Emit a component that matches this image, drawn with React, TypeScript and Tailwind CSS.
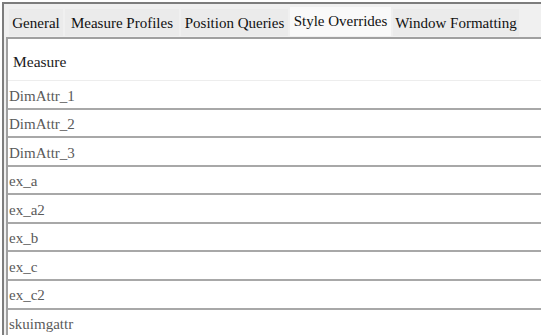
import React from 'react';

const tabs = [
  { label: 'General', w: 'w-[54px]' },
  { label: 'Measure Profiles', w: 'w-[114px]' },
  { label: 'Position Queries', w: 'w-[107px]' },
  { label: 'Style Overrides', w: 'w-[101px]', active: true },
  { label: 'Window Formatting', w: 'w-[126px]' },
];
const rows = ['DimAttr_1', 'DimAttr_2', 'DimAttr_3', 'ex_a', 'ex_a2', 'ex_b', 'ex_c', 'ex_c2', 'skuimgattr'];

export default function App() {
  return (
    <div className="w-[541px] h-[335px] overflow-hidden bg-white font-['Liberation_Serif','Times_New_Roman',serif]">
      <div className="mt-[2px] ml-[2px] h-[333px] border-l-2 border-t-2 border-[#7d7d7d] bg-[#f0f0f0]">
        {/* Tab strip */}
        <div className="flex items-end gap-[2px] h-[32px] pl-[5px]">
          {tabs.map((t) =>
            t.active ? (
              <div
                key={t.label}
                className={`${t.w} h-[29px] pt-[5px] text-center whitespace-nowrap bg-[#f9f9f9] text-[15px] leading-[18px] text-[#111]`}
              >
                {t.label}
              </div>
            ) : (
              <div
                key={t.label}
                className={`${t.w} h-[27px] pt-[5px] text-center whitespace-nowrap bg-[#ebebeb] text-[15px] leading-[18px] text-[#111]`}
              >
                {t.label}
              </div>
            )
          )}
        </div>

        {/* Content panel */}
        <div className="ml-[2px] mt-[1px] h-[300px] border-l-2 border-t-2 border-[#a0a0a0] bg-white">
          <div className="h-[42px] pt-[14px] pl-[5px] border-b border-[#ededed] text-[15.5px] leading-[18px] text-[#1a1a1a]">
            Measure
          </div>
          {rows.map((r) => (
            <div
              key={r}
              className="h-[28.57px] flex items-center pt-[3px] pl-[1px] border-b-2 border-[#a8a8a8] text-[15px] text-[#5a5a5a]"
            >
              {r}
            </div>
          ))}
        </div>
      </div>
    </div>
  );
}
